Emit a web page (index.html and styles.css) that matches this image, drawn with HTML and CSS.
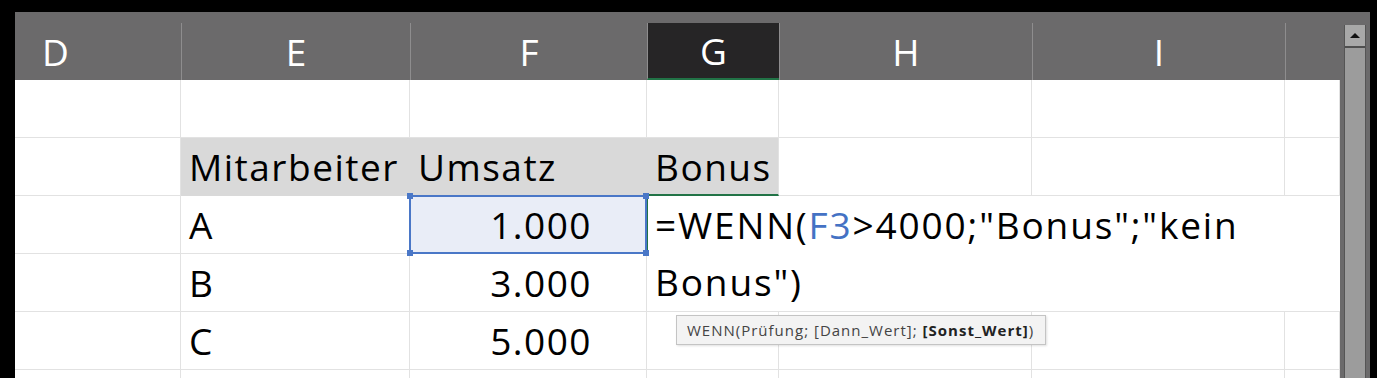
FILE: index.html
```html
<!DOCTYPE html>
<html lang="de">
<head>
<meta charset="utf-8">
<title>Excel WENN</title>
<link rel="stylesheet" href="styles.css">
</head>
<body>
<div class="screen">
  <div class="topbar"></div>
  <div class="main">
    <div class="leftbar"></div>
    <div class="sheet">
      <div class="colheads">
        <div class="ch ch-d">D</div>
        <div class="ch">E</div>
        <div class="ch">F</div>
        <div class="ch ch-active">G</div>
        <div class="ch">H</div>
        <div class="ch">I</div>
        <div class="ch"></div>
      </div>
      <div class="grid">
        <!-- row 1 -->
        <div class="c"></div><div class="c"></div><div class="c"></div><div class="c"></div><div class="c"></div><div class="c"></div><div class="c"></div>
        <!-- row 2 -->
        <div class="c"></div>
        <div class="c hd">Mitarbeiter</div>
        <div class="c hd">Umsatz</div>
        <div class="c hd hd-last">Bonus</div>
        <div class="c"></div><div class="c"></div><div class="c"></div>
        <!-- row 3 -->
        <div class="c"></div>
        <div class="c">A</div>
        <div class="c num sel">1.000
          <span class="h h-tl"></span><span class="h h-tr"></span><span class="h h-bl"></span><span class="h h-br"></span>
        </div>
        <div class="edit"><span class="fx">=WENN(<span class="ref">F3</span>&gt;4000;"Bonus";"kein<br>Bonus")</span></div>
        <!-- row 4 -->
        <div class="c"></div>
        <div class="c">B</div>
        <div class="c num">3.000</div>
        <!-- row 5 -->
        <div class="c"></div>
        <div class="c">C</div>
        <div class="c num">5.000</div>
        <div class="c"></div><div class="c"></div><div class="c"></div><div class="c"></div>
        <!-- row 6 -->
        <div class="c"></div><div class="c"></div><div class="c"></div><div class="c"></div><div class="c"></div><div class="c"></div><div class="c"></div>
        <div class="tip">WENN(Prüfung; [Dann_Wert]; <b>[Sonst_Wert]</b>)</div>
      </div>
    </div>
    <div class="rightpanel">
      <div class="vscroll">
        <div class="up"><span class="tri"></span></div>
        <div class="track"></div>
      </div>
    </div>
  </div>
</div>
</body>
</html>
```
FILE: styles.css
```css
* { box-sizing: border-box; }
html, body { margin: 0; padding: 0; background: #000; }
body { width: 1377px; height: 378px; overflow: hidden; }

.screen { width: 1377px; height: 378px; display: flex; flex-direction: column; }
.topbar { height: 12px; background: #000; flex: none; }
.main { flex: 1; display: flex; overflow: hidden; }
.leftbar { width: 15px; flex: none; background: #000; }
.sheet { width: 1325px; flex: none; display: flex; flex-direction: column; }

.colheads {
  height: 68px;
  background: #6b6a6b;
  padding-top: 11px;
  display: grid;
  grid-template-columns: 166px 229px 237px 132px 253px 253px 55px;
}
.ch {
  border-left: 1px solid #8e8d8e;
  color: #fff;
  font-family: "Open Sans", sans-serif;
  font-size: 37px;
  line-height: 57px;
  text-align: center;
}
.ch-d { border-left: none; text-align: left; padding-left: 27px; }
.ch-active { background: #262526; border-bottom: 2px solid #217346; line-height: 55px; }

.grid {
  position: relative;
  flex: 1;
  background: #fff;
  display: grid;
  grid-template-columns: 166px 229px 237px 132px 253px 253px 55px;
  grid-auto-rows: 58px;
  font-family: "Open Sans", sans-serif;
  font-size: 37px;
  letter-spacing: 1.5px;
  color: #000;
}
.c {
  position: relative;
  border-right: 1px solid #e2e2e2;
  border-bottom: 1px solid #e2e2e2;
  padding: 1px 0 0 8px;
  line-height: 56px;
  white-space: nowrap;
}
.hd { background: #d9d9d9; border-right-color: #d9d9d9; border-bottom-color: #d9d9d9; }
.hd-last { border-right-color: #e2e2e2; border-bottom: 2px solid #217346; }
.num { text-align: right; padding-right: 54px; padding-left: 0; }
.sel { background: #e9edf7; }
.sel::after {
  content: "";
  position: absolute;
  left: -1px; top: -1px; right: -1px; bottom: -1px;
  border: 2px solid #4a77c7;
}
.h { position: absolute; width: 6px; height: 6px; background: #4a77c7; z-index: 2; }
.h-tl { left: -3px; top: -3px; }
.h-tr { right: -3px; top: -3px; }
.h-bl { left: -3px; bottom: -3px; }
.h-br { right: -3px; bottom: -3px; }

.edit {
  grid-column: 4 / 8;
  grid-row: 3 / 5;
  position: relative;
  background: #fff;
  border-bottom: 1px solid #e2e2e2;
  padding: 0 0 0 8px;
  line-height: 57px;
  letter-spacing: 1.85px;
  white-space: nowrap;
  overflow: hidden;
}
.edit::before {
  content: "";
  position: absolute;
  left: -1px; top: -1px;
  width: 134px; height: 59px;
  border-left: 2px solid #217346;
}
.ref { color: #4472c4; }

.tip {
  position: absolute;
  left: 661px; top: 235px;
  width: 370px; height: 30px;
  background: #f3f3f3;
  border: 1px solid #c4c4c4;
  box-shadow: 1px 1px 2px rgba(0,0,0,0.12);
  font-family: "Open Sans", sans-serif;
  font-size: 15px;
  letter-spacing: 1px;
  line-height: 28px;
  color: #444;
  padding-left: 10px;
  white-space: nowrap;
}
.tip b { color: #222; }

.rightpanel { width: 30px; flex: none; background: #6b6a6b; padding: 13px 4px 0 4px; }
.vscroll { height: 100%; display: flex; flex-direction: column; border-left: 1px solid #555; border-right: 1px solid #555; }
.up { height: 23px; background: #a8a8a8; border-bottom: 2px solid #4f4f4f; display: flex; align-items: center; justify-content: center; }
.tri { width: 0; height: 0; border-left: 5px solid transparent; border-right: 5px solid transparent; border-bottom: 5px solid #111; }
.track { flex: 1; background: #9c9c9c; }
```
